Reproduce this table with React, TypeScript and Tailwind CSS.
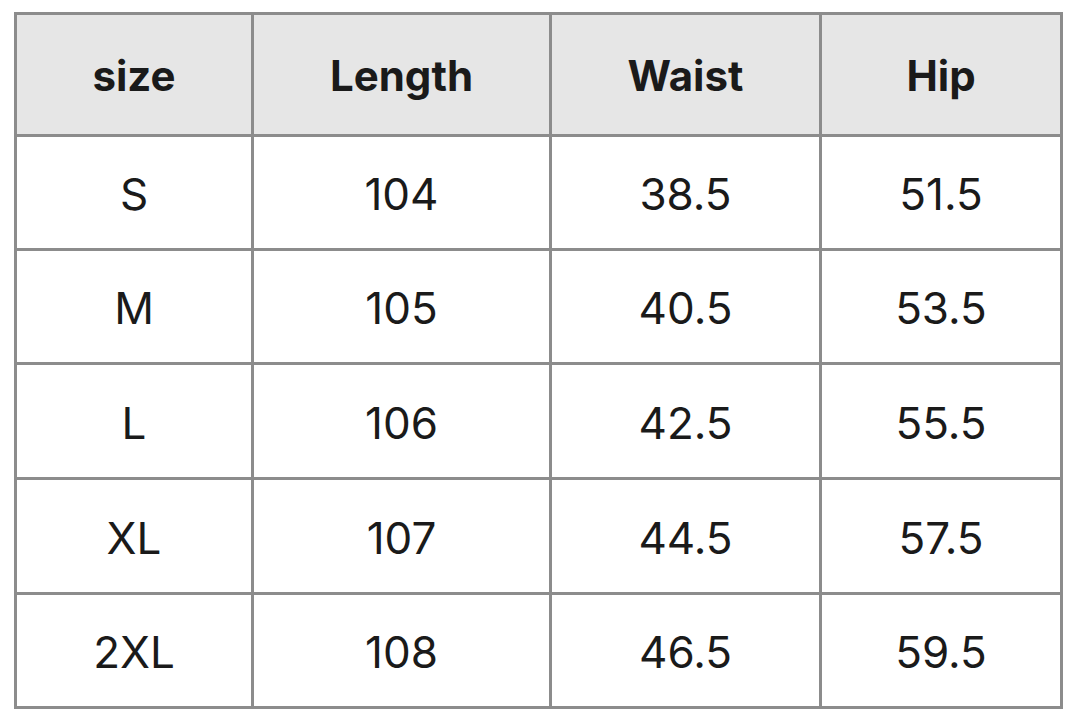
import React from 'react';

const headers = ['size', 'Length', 'Waist', 'Hip'];

const rows = [
  ['S', '104', '38.5', '51.5'],
  ['M', '105', '40.5', '53.5'],
  ['L', '106', '42.5', '55.5'],
  ['XL', '107', '44.5', '57.5'],
  ['2XL', '108', '46.5', '59.5'],
];

const App = () => {
  return (
    <div className="w-[1073px] h-[714px] bg-white pt-[12px] pl-[14px]" style={{ fontFamily: 'Inter, "Liberation Sans", sans-serif' }}>
      {/* Size chart grid: gray background shows through the gaps as borders */}
      <div className="w-[1049px] grid grid-cols-[234px_295px_267px_238px] grid-rows-[119px_111px_111px_112px_112px_111px] gap-[3px] p-[3px] bg-[#8c8c8c] text-[#1a1a1a]">
        {headers.map((h) => (
          <div key={h} className="bg-[#e6e6e6] flex items-center justify-center pt-[2px] text-[42px] font-bold">
            {h}
          </div>
        ))}
        {rows.map((row) =>
          row.map((cell, i) => (
            <div key={row[0] + i} className="bg-white flex items-center justify-center pt-[3px] text-[44px] font-normal">
              {cell}
            </div>
          ))
        )}
      </div>
    </div>
  );
};

export default App;
